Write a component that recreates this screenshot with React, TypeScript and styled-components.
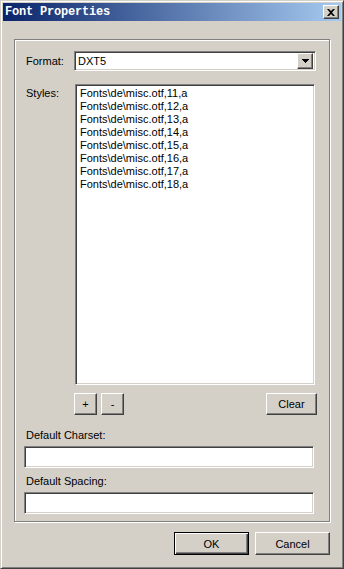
import styled, { createGlobalStyle } from "styled-components";

const GlobalStyle = createGlobalStyle`
  html, body {
    margin: 0;
    padding: 0;
    background: #d4d0c8;
  }
  body {
    font-family: "Liberation Sans", Arial, sans-serif;
    font-size: 11px;
    color: #000;
  }
`;

const styles = [11, 12, 13, 14, 15, 16, 17, 18].map(
  (n) => `Fonts\\de\\misc.otf,${n},a`
);

const App = () => {
  return (
    <>
      <GlobalStyle />
      <Window>
        <TitleBar>
          <Caption>Font Properties</Caption>
          <CloseButton aria-label="Close">
            <svg width="8" height="7" viewBox="0 0 8 7">
              <path
                d="M0 0h2l2 2 2-2h2L5 3.5 8 7H6L4 5 2 7H0l3-3.5z"
                fill="#000"
              />
            </svg>
          </CloseButton>
        </TitleBar>
        <Body>
          <GroupBox>
            <FieldGrid>
              <FieldLabel>Format:</FieldLabel>
              <Combo>
                <ComboText>DXT5</ComboText>
                <DropButton>
                  <svg width="7" height="4" viewBox="0 0 7 4">
                    <path d="M0 0h7v1H6v1H5v1H4v1H3V3H2V2H1V1H0z" fill="#000" />
                  </svg>
                </DropButton>
              </Combo>
              <FieldLabel $top>Styles:</FieldLabel>
              <ListBox>
                {styles.map((s) => (
                  <ListItem key={s}>{s}</ListItem>
                ))}
              </ListBox>
            </FieldGrid>
            <ListTools>
              <Button $w={23}>+</Button>
              <Button $w={23}>-</Button>
              <Spacer />
              <Button $w={51}>Clear</Button>
            </ListTools>
            <BoxLabel $gap={14}>Default Charset:</BoxLabel>
            <TextBox />
            <BoxLabel $gap={7}>Default Spacing:</BoxLabel>
            <TextBox />
          </GroupBox>
          <DialogButtons>
            <Button $w={75} $h={23} $default>
              OK
            </Button>
            <Button $w={75} $h={23}>
              Cancel
            </Button>
          </DialogButtons>
        </Body>
      </Window>
    </>
  );
};

const Window = styled.div`
  box-sizing: border-box;
  width: 344px;
  height: 569px;
  background: #d4d0c8;
  border: 1px solid;
  border-color: #d4d0c8 #404040 #404040 #d4d0c8;
  box-shadow: inset 1px 1px #fff, inset -1px -1px #808080;
  padding: 2px;
  display: flex;
  flex-direction: column;
`;

const TitleBar = styled.div`
  height: 18px;
  flex: none;
  display: flex;
  align-items: center;
  justify-content: space-between;
  padding: 0 2px;
  background: linear-gradient(to right, #0a246a, #a6caf0);
`;

const Caption = styled.span`
  font-family: "Liberation Mono", "Courier New", monospace;
  font-weight: bold;
  font-size: 12px;
  letter-spacing: -0.2px;
  color: #fff;
  white-space: nowrap;
`;

const raised = `
  border: 1px solid;
  border-color: #fff #404040 #404040 #fff;
  box-shadow: inset -1px -1px #808080, inset 1px 1px #d4d0c8;
  background: #d4d0c8;
`;

const sunken = `
  border: 1px solid;
  border-color: #808080 #fff #fff #808080;
  box-shadow: inset 1px 1px #404040, inset -1px -1px #d4d0c8;
  background: #fff;
`;

const CloseButton = styled.button`
  box-sizing: border-box;
  width: 16px;
  height: 14px;
  padding: 0;
  display: flex;
  align-items: center;
  justify-content: center;
  ${raised}
`;

const Body = styled.div`
  flex: 1;
  display: flex;
  flex-direction: column;
  padding: 18px 11px 11px 11px;
`;

const GroupBox = styled.div`
  box-sizing: border-box;
  width: 316px;
  display: flex;
  flex-direction: column;
  align-items: flex-start;
  padding: 11px 0 7px 9px;
  border: 1px solid #808080;
  box-shadow: inset 1px 1px #fff, 1px 1px #fff;
`;

const FieldGrid = styled.div`
  display: grid;
  grid-template-columns: 50px auto;
  row-gap: 13px;
  align-items: center;
`;

const FieldLabel = styled.div<{ $top?: boolean }>`
  line-height: 13px;
  margin-left: 2px;
  white-space: nowrap;
  align-self: ${(p) => (p.$top ? "start" : "center")};
  padding-top: ${(p) => (p.$top ? 3 : 0)}px;
`;

const BoxLabel = styled.div<{ $gap: number }>`
  line-height: 13px;
  margin-left: 2px;
  white-space: nowrap;
  margin-top: ${(p) => p.$gap}px;
  margin-bottom: 4px;
`;

const Combo = styled.div`
  box-sizing: border-box;
  width: 242px;
  height: 20px;
  display: flex;
  align-items: center;
  padding: 2px;
  ${sunken}
`;

const ComboText = styled.span`
  flex: 1;
  padding-left: 1px;
  line-height: 13px;
`;

const DropButton = styled.div`
  box-sizing: border-box;
  width: 16px;
  height: 16px;
  display: flex;
  align-items: center;
  justify-content: center;
  ${raised}
`;

const ListBox = styled.div`
  box-sizing: border-box;
  width: 240px;
  height: 301px;
  margin-left: 1px;
  padding: 2px 2px 2px 4px;
  ${sunken}
`;

const ListItem = styled.div`
  line-height: 13px;
  white-space: nowrap;
`;

const ListTools = styled.div`
  display: flex;
  gap: 4px;
  width: 293px;
  margin-top: 8px;
  padding-left: 50px;
  box-sizing: border-box;
`;

const Spacer = styled.div`
  flex: 1;
`;

const Button = styled.button<{ $w: number; $h?: number; $default?: boolean }>`
  box-sizing: border-box;
  width: ${(p) => p.$w}px;
  height: ${(p) => p.$h ?? 22}px;
  padding: 0;
  font-family: "Liberation Sans", Arial, sans-serif;
  font-size: 11px;
  color: #000;
  ${raised}
  ${(p) =>
    p.$default &&
    `
    border: 1px solid #000;
    box-shadow: inset 1px 1px #fff, inset -1px -1px #404040, inset -2px -2px #808080;
  `}
`;

const TextBox = styled.div`
  box-sizing: border-box;
  width: 290px;
  height: 22px;
  ${sunken}
`;

const DialogButtons = styled.div`
  display: flex;
  justify-content: flex-end;
  gap: 6px;
  margin-top: 10px;
`;

export default App;
